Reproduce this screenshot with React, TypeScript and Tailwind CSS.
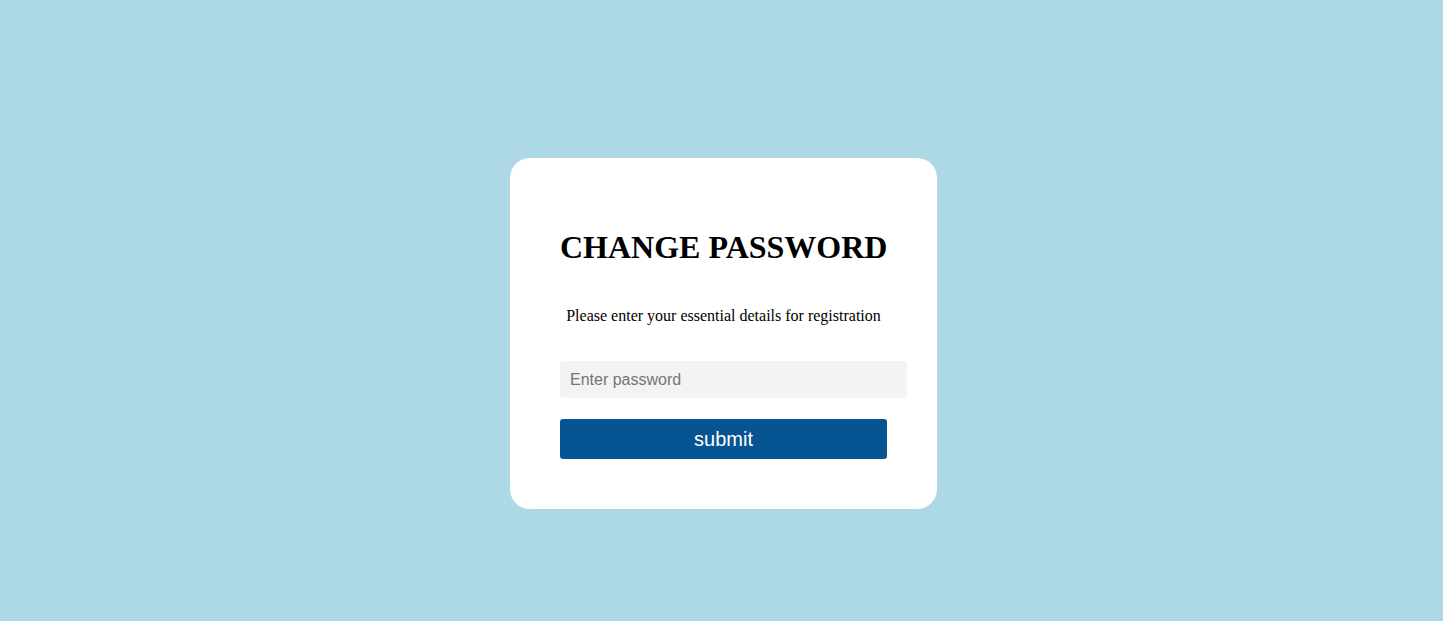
export default function App() {
  return (
    <div className="w-full h-[621px] bg-[#add8e6] flex items-start justify-center pt-[158px] pl-[4px] font-['Liberation_Serif','Times_New_Roman',serif]">
      <div className="w-[427px] bg-white rounded-[20px] p-[50px] flex flex-col items-start">
        <h1 className="w-[327px] whitespace-nowrap text-center text-[32px] font-bold leading-[37px] mt-[21px] text-black">
          CHANGE PASSWORD
        </h1>
        <p className="w-[327px] text-center text-[16px] leading-[18px] mt-[41px] text-black">
          Please enter your essential details for registration
        </p>
        <input
          type="password"
          placeholder="Enter password"
          className="mt-[36px] w-[347px] h-[37px] px-[10px] bg-[#f3f3f3] rounded-[4px] text-[16px] outline-none font-['Liberation_Sans',Arial,sans-serif] placeholder:text-[#757575]"
        />
        <button className="mt-[21px] w-[327px] h-[40px] bg-[#065592] text-white text-[20px] rounded-[3px] font-['Liberation_Sans',Arial,sans-serif]">
          submit
        </button>
      </div>
    </div>
  );
}
